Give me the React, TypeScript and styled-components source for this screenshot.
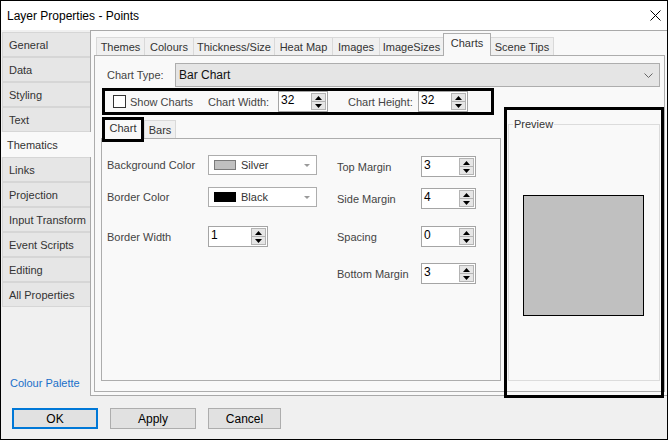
import React from "react";
import styled, { createGlobalStyle } from "styled-components";

const GlobalStyle = createGlobalStyle`
  html, body { margin: 0; padding: 0; background: #fff; }
  body { font-family: "Liberation Sans", Arial, sans-serif; font-size: 11px; color: #333; }
  * { box-sizing: border-box; }
`;

const Window = styled.div`
  position: relative;
  width: 668px;
  height: 440px;
  border: 1px solid #000;
  background: #f0f0f0;
  display: flex;
  flex-direction: column;
  overflow: hidden;
`;

const TitleBar = styled.div`
  height: 29px;
  flex: none;
  background: #fff;
  display: flex;
  align-items: center;
  justify-content: space-between;
  padding: 0 6px;
  font-size: 12px;
  color: #000;
`;

const Body = styled.div`
  flex: none;
  height: 366px;
  display: flex;
`;

const Nav = styled.div`
  width: 89px;
  flex: none;
  display: flex;
  flex-direction: column;
  padding-top: 2px;
`;

const NavItem = styled.div<{ $active?: boolean }>`
  position: relative;
  height: 25px;
  display: flex;
  align-items: center;
  font-size: 11px;
  color: #333;
  ${({ $active }) =>
    $active
      ? `
    width: 90px;
    margin-right: -1px;
    padding-left: 6px;
    background: #f9f9f9;
    z-index: 2;
  `
      : `
    width: 88px;
    margin-left: 1px;
    padding-left: 6px;
    background: #e6e6e6;
    border: 1px solid #d6d6d6;
    border-right: none;
  `}
`;

const NavLink = styled.div`
  margin-top: auto;
  padding: 0 0 6px 9px;
  line-height: 13px;
  font-size: 11px;
  color: #1a6fc9;
`;

const Panel = styled.div`
  flex: 1;
  display: flex;
  flex-direction: column;
  background: #f9f9f9;
  border: 1px solid #a9a9a9;
  border-right: none;
  padding: 2px 2px 3px 3px;
`;

const TabStrip = styled.div`
  height: 22px;
  flex: none;
  display: flex;
  align-items: flex-end;
  padding-left: 2px;
`;

const Tab = styled.div<{ $w: number; $active?: boolean }>`
  position: relative;
  width: ${({ $w }) => $w}px;
  height: ${({ $active }) => ($active ? 23 : 18)}px;
  margin-left: -1px;
  margin-bottom: ${({ $active }) => ($active ? -1 : 0)}px;
  z-index: ${({ $active }) => ($active ? 2 : 1)};
  display: flex;
  align-items: ${({ $active }) => ($active ? "flex-start" : "center")};
  justify-content: center;
  padding-top: ${({ $active }) => ($active ? 3 : 0)}px;
  font-size: 11px;
  color: #333;
  background: ${({ $active }) => ($active ? "#f9f9f9" : "#f0f0f0")};
  border: 1px solid ${({ $active }) => ($active ? "#adadad" : "#d9d9d9")};
  border-bottom: none;
  &:first-child { margin-left: 0; }
`;

const TabContent = styled.div`
  flex: 1;
  display: flex;
  flex-direction: column;
  border: 1px solid #adadad;
  background: #f9f9f9;
`;

const TypeRow = styled.div`
  display: flex;
  align-items: center;
  margin: 7px 4px 0 12px;
`;

const Label = styled.span<{ $w?: number }>`
  flex: none;
  width: ${({ $w }) => ($w ? `${$w}px` : "auto")};
  font-size: 11px;
  color: #444;
  white-space: nowrap;
`;

const Dropdown = styled.div`
  flex: 1;
  height: 24px;
  display: flex;
  align-items: center;
  justify-content: space-between;
  padding: 0 6px 0 3px;
  background: #e5e5e5;
  border: 1px solid #adadad;
  font-size: 12px;
  color: #111;
`;

const Lower = styled.div`
  flex: 1;
  display: flex;
  gap: 7px;
  margin-top: 1px;
  padding: 0 4px 10px 6px;
`;

const LeftCol = styled.div`
  width: 400px;
  flex: none;
  display: flex;
  flex-direction: column;
`;

const ShowBox = styled.div`
  width: 392px;
  height: 27px;
  margin-left: 1px;
  border: 3px solid #000;
  display: flex;
  align-items: center;
  padding-left: 8px;
`;

const CheckBox = styled.span`
  width: 13px;
  height: 13px;
  flex: none;
  margin-right: 4px;
  background: #fff;
  border: 1px solid #333;
`;

const SubStrip = styled.div`
  height: 23px;
  flex: none;
  display: flex;
  align-items: flex-end;
  padding-left: 1px;
`;

const SubTab = styled.div<{ $w: number; $active?: boolean }>`
  position: relative;
  width: ${({ $w }) => $w}px;
  height: ${({ $active }) => ($active ? 25 : 18)}px;
  margin-bottom: ${({ $active }) => ($active ? -4 : 0)}px;
  z-index: ${({ $active }) => ($active ? 2 : 1)};
  display: flex;
  align-items: center;
  justify-content: center;
  padding-bottom: ${({ $active }) => ($active ? 3 : 0)}px;
  font-size: 11px;
  color: #333;
  background: ${({ $active }) => ($active ? "#f9f9f9" : "#f0f0f0")};
  border: ${({ $active }) => ($active ? "3px solid #000" : "1px solid #d9d9d9")};
  border-bottom: ${({ $active }) => ($active ? "3px solid #000" : "none")};
`;

const InnerBox = styled.div`
  flex: 1;
  display: flex;
  border: 1px solid #adadad;
  background: #f9f9f9;
  padding-left: 5px;
`;

const FormCol = styled.div<{ $w?: number }>`
  width: ${({ $w }) => ($w ? `${$w}px` : "auto")};
  flex: none;
  display: flex;
  flex-direction: column;
`;

const FieldRow = styled.div<{ $mt: number }>`
  display: flex;
  align-items: center;
  margin-top: ${({ $mt }) => $mt}px;
`;

const SpinBox = styled.div<{ $w: number; $h: number }>`
  width: ${({ $w }) => $w}px;
  height: ${({ $h }) => $h}px;
  flex: none;
  display: flex;
  align-items: stretch;
  background: #fff;
  border: 1px solid #a5a5a5;
  padding: 1px;
`;

const SpinText = styled.span`
  flex: 1;
  padding-left: 1px;
  font-size: 12px;
  line-height: 15px;
  color: #000;
`;

const SpinButtons = styled.div`
  width: 15px;
  display: flex;
  flex-direction: column;
`;

const SpinButton = styled.div`
  flex: 1;
  display: flex;
  align-items: center;
  justify-content: center;
  background: #e6e6e6;
  border: 1px solid #b4b4b4;
  & + & { border-top: none; }
`;

const ColorCombo = styled.div`
  width: 109px;
  height: 20px;
  flex: none;
  display: flex;
  align-items: center;
  background: #fff;
  border: 1px solid #adadad;
  padding: 0 6px 0 5px;
  font-size: 11px;
  color: #333;
`;

const Swatch = styled.span<{ $color: string }>`
  width: 22px;
  height: 10px;
  margin-right: 5px;
  background: ${({ $color }) => $color};
  border: 1px solid ${({ $color }) => ($color === "#000" ? "#000" : "#7a7a7a")};
`;

const ComboArrow = styled.span`
  margin-left: auto;
  width: 0;
  height: 0;
  border-left: 3px solid transparent;
  border-right: 3px solid transparent;
  border-top: 3px solid #9a9a9a;
`;

const PreviewCol = styled.div`
  position: relative;
  flex: 1;
  display: flex;
  flex-direction: column;
`;

const Group = styled.fieldset`
  flex: 1;
  margin: 30px 0 0 0;
  padding: 0;
  min-width: 0;
  border: 1px solid #dcdcdc;
  display: flex;
  align-items: center;
  justify-content: center;
`;

const Legend = styled.legend`
  margin-left: 4px;
  padding: 0 1px;
  font-size: 11px;
  line-height: 13px;
  color: #333;
`;

const PreviewSquare = styled.div`
  width: 121px;
  height: 121px;
  margin: 0 2px 0 0;
  background: #c0c0c0;
  border: 1px solid #000;
`;

const Highlight = styled.div`
  position: absolute;
  left: -4px;
  right: -4px;
  top: 19px;
  height: 291px;
  border: 3px solid #000;
  pointer-events: none;
  z-index: 5;
`;

const Footer = styled.div`
  flex: 1;
  display: flex;
  align-items: flex-start;
  gap: 12px;
  padding: 12px 0 0 11px;
`;

const Button = styled.button<{ $w: number; $default?: boolean }>`
  width: ${({ $w }) => $w}px;
  height: 21px;
  margin: 0;
  padding: 0;
  font-family: "Liberation Sans", Arial, sans-serif;
  font-size: 12px;
  color: #000;
  background: #e1e1e1;
  border: ${({ $default }) => ($default ? "2px solid #0078d7" : "1px solid #adadad")};
`;

const Arrow: React.FC<{ down?: boolean }> = ({ down }) => (
  <svg width="7" height="4" viewBox="0 0 7 4">
    <polygon points={down ? "0,0 7,0 3.5,4" : "3.5,0 7,4 0,4"} fill="#000" />
  </svg>
);

interface SpinProps {
  value: string;
  w: number;
  h: number;
}

const Spin: React.FC<SpinProps> = (props) => (
  <SpinBox $w={props.w} $h={props.h}>
    <SpinText>{props.value}</SpinText>
    <SpinButtons>
      <SpinButton><Arrow /></SpinButton>
      <SpinButton><Arrow down /></SpinButton>
    </SpinButtons>
  </SpinBox>
);

const navItems = [
  "General", "Data", "Styling", "Text", "Thematics", "Links", "Projection",
  "Input Transform", "Event Scripts", "Editing", "All Properties",
];

const tabs: [string, number][] = [
  ["Themes", 49], ["Colours", 50], ["Thickness/Size", 82], ["Heat Map", 59],
  ["Images", 48], ["ImageSizes", 65], ["Charts", 48], ["Scene Tips", 64],
];

const App: React.FC = () => {
  return (
    <>
      <GlobalStyle />
      <Window>
        <TitleBar>
          <span>Layer Properties - Points</span>
          <svg width="11" height="11" viewBox="0 0 11 11">
            <path d="M0.5 0.5 L10.5 10.5 M10.5 0.5 L0.5 10.5" stroke="#000" strokeWidth="1" />
          </svg>
        </TitleBar>
        <Body>
          <Nav>
            {navItems.map((n) => (
              <NavItem key={n} $active={n === "Thematics"}>{n}</NavItem>
            ))}
            <NavLink>Colour Palette</NavLink>
          </Nav>
          <Panel>
            <TabStrip>
              {tabs.map(([t, w]) => (
                <Tab key={t} $w={w} $active={t === "Charts"}>{t}</Tab>
              ))}
            </TabStrip>
            <TabContent>
              <TypeRow>
                <Label $w={68}>Chart Type:</Label>
                <Dropdown>
                  <span>Bar Chart</span>
                  <svg width="9" height="5" viewBox="0 0 9 5">
                    <path d="M0.5 0.5 L4.5 4.5 L8.5 0.5" stroke="#666" fill="none" strokeWidth="1" />
                  </svg>
                </Dropdown>
              </TypeRow>
              <Lower>
                <LeftCol>
                  <ShowBox>
                    <CheckBox />
                    <Label $w={78}>Show Charts</Label>
                    <Label $w={70}>Chart Width:</Label>
                    <Spin value="32" w={50} h={21} />
                    <Label $w={70} style={{ marginLeft: 20 }}>Chart Height:</Label>
                    <Spin value="32" w={50} h={21} />
                  </ShowBox>
                  <SubStrip>
                    <SubTab $w={42} $active>Chart</SubTab>
                    <SubTab $w={32}>Bars</SubTab>
                  </SubStrip>
                  <InnerBox>
                    <FormCol $w={230}>
                      <FieldRow $mt={16}>
                        <Label $w={101}>Background Color</Label>
                        <ColorCombo>
                          <Swatch $color="#c0c0c0" />
                          Silver
                          <ComboArrow />
                        </ColorCombo>
                      </FieldRow>
                      <FieldRow $mt={12}>
                        <Label $w={101}>Border Color</Label>
                        <ColorCombo>
                          <Swatch $color="#000" />
                          Black
                          <ComboArrow />
                        </ColorCombo>
                      </FieldRow>
                      <FieldRow $mt={19}>
                        <Label $w={101}>Border Width</Label>
                        <Spin value="1" w={60} h={21} />
                      </FieldRow>
                    </FormCol>
                    <FormCol>
                      <FieldRow $mt={17}>
                        <Label $w={84}>Top Margin</Label>
                        <Spin value="3" w={55} h={21} />
                      </FieldRow>
                      <FieldRow $mt={11}>
                        <Label $w={84}>Side Margin</Label>
                        <Spin value="4" w={55} h={21} />
                      </FieldRow>
                      <FieldRow $mt={17}>
                        <Label $w={84}>Spacing</Label>
                        <Spin value="0" w={55} h={21} />
                      </FieldRow>
                      <FieldRow $mt={16}>
                        <Label $w={84}>Bottom Margin</Label>
                        <Spin value="3" w={55} h={21} />
                      </FieldRow>
                    </FormCol>
                  </InnerBox>
                </LeftCol>
                <PreviewCol>
                  <Group>
                    <Legend>Preview</Legend>
                    <PreviewSquare />
                  </Group>
                  <Highlight />
                </PreviewCol>
              </Lower>
            </TabContent>
          </Panel>
        </Body>
        <Footer>
          <Button $w={86} $default>OK</Button>
          <Button $w={86}>Apply</Button>
          <Button $w={73}>Cancel</Button>
        </Footer>
      </Window>
    </>
  );
};

export default App;
